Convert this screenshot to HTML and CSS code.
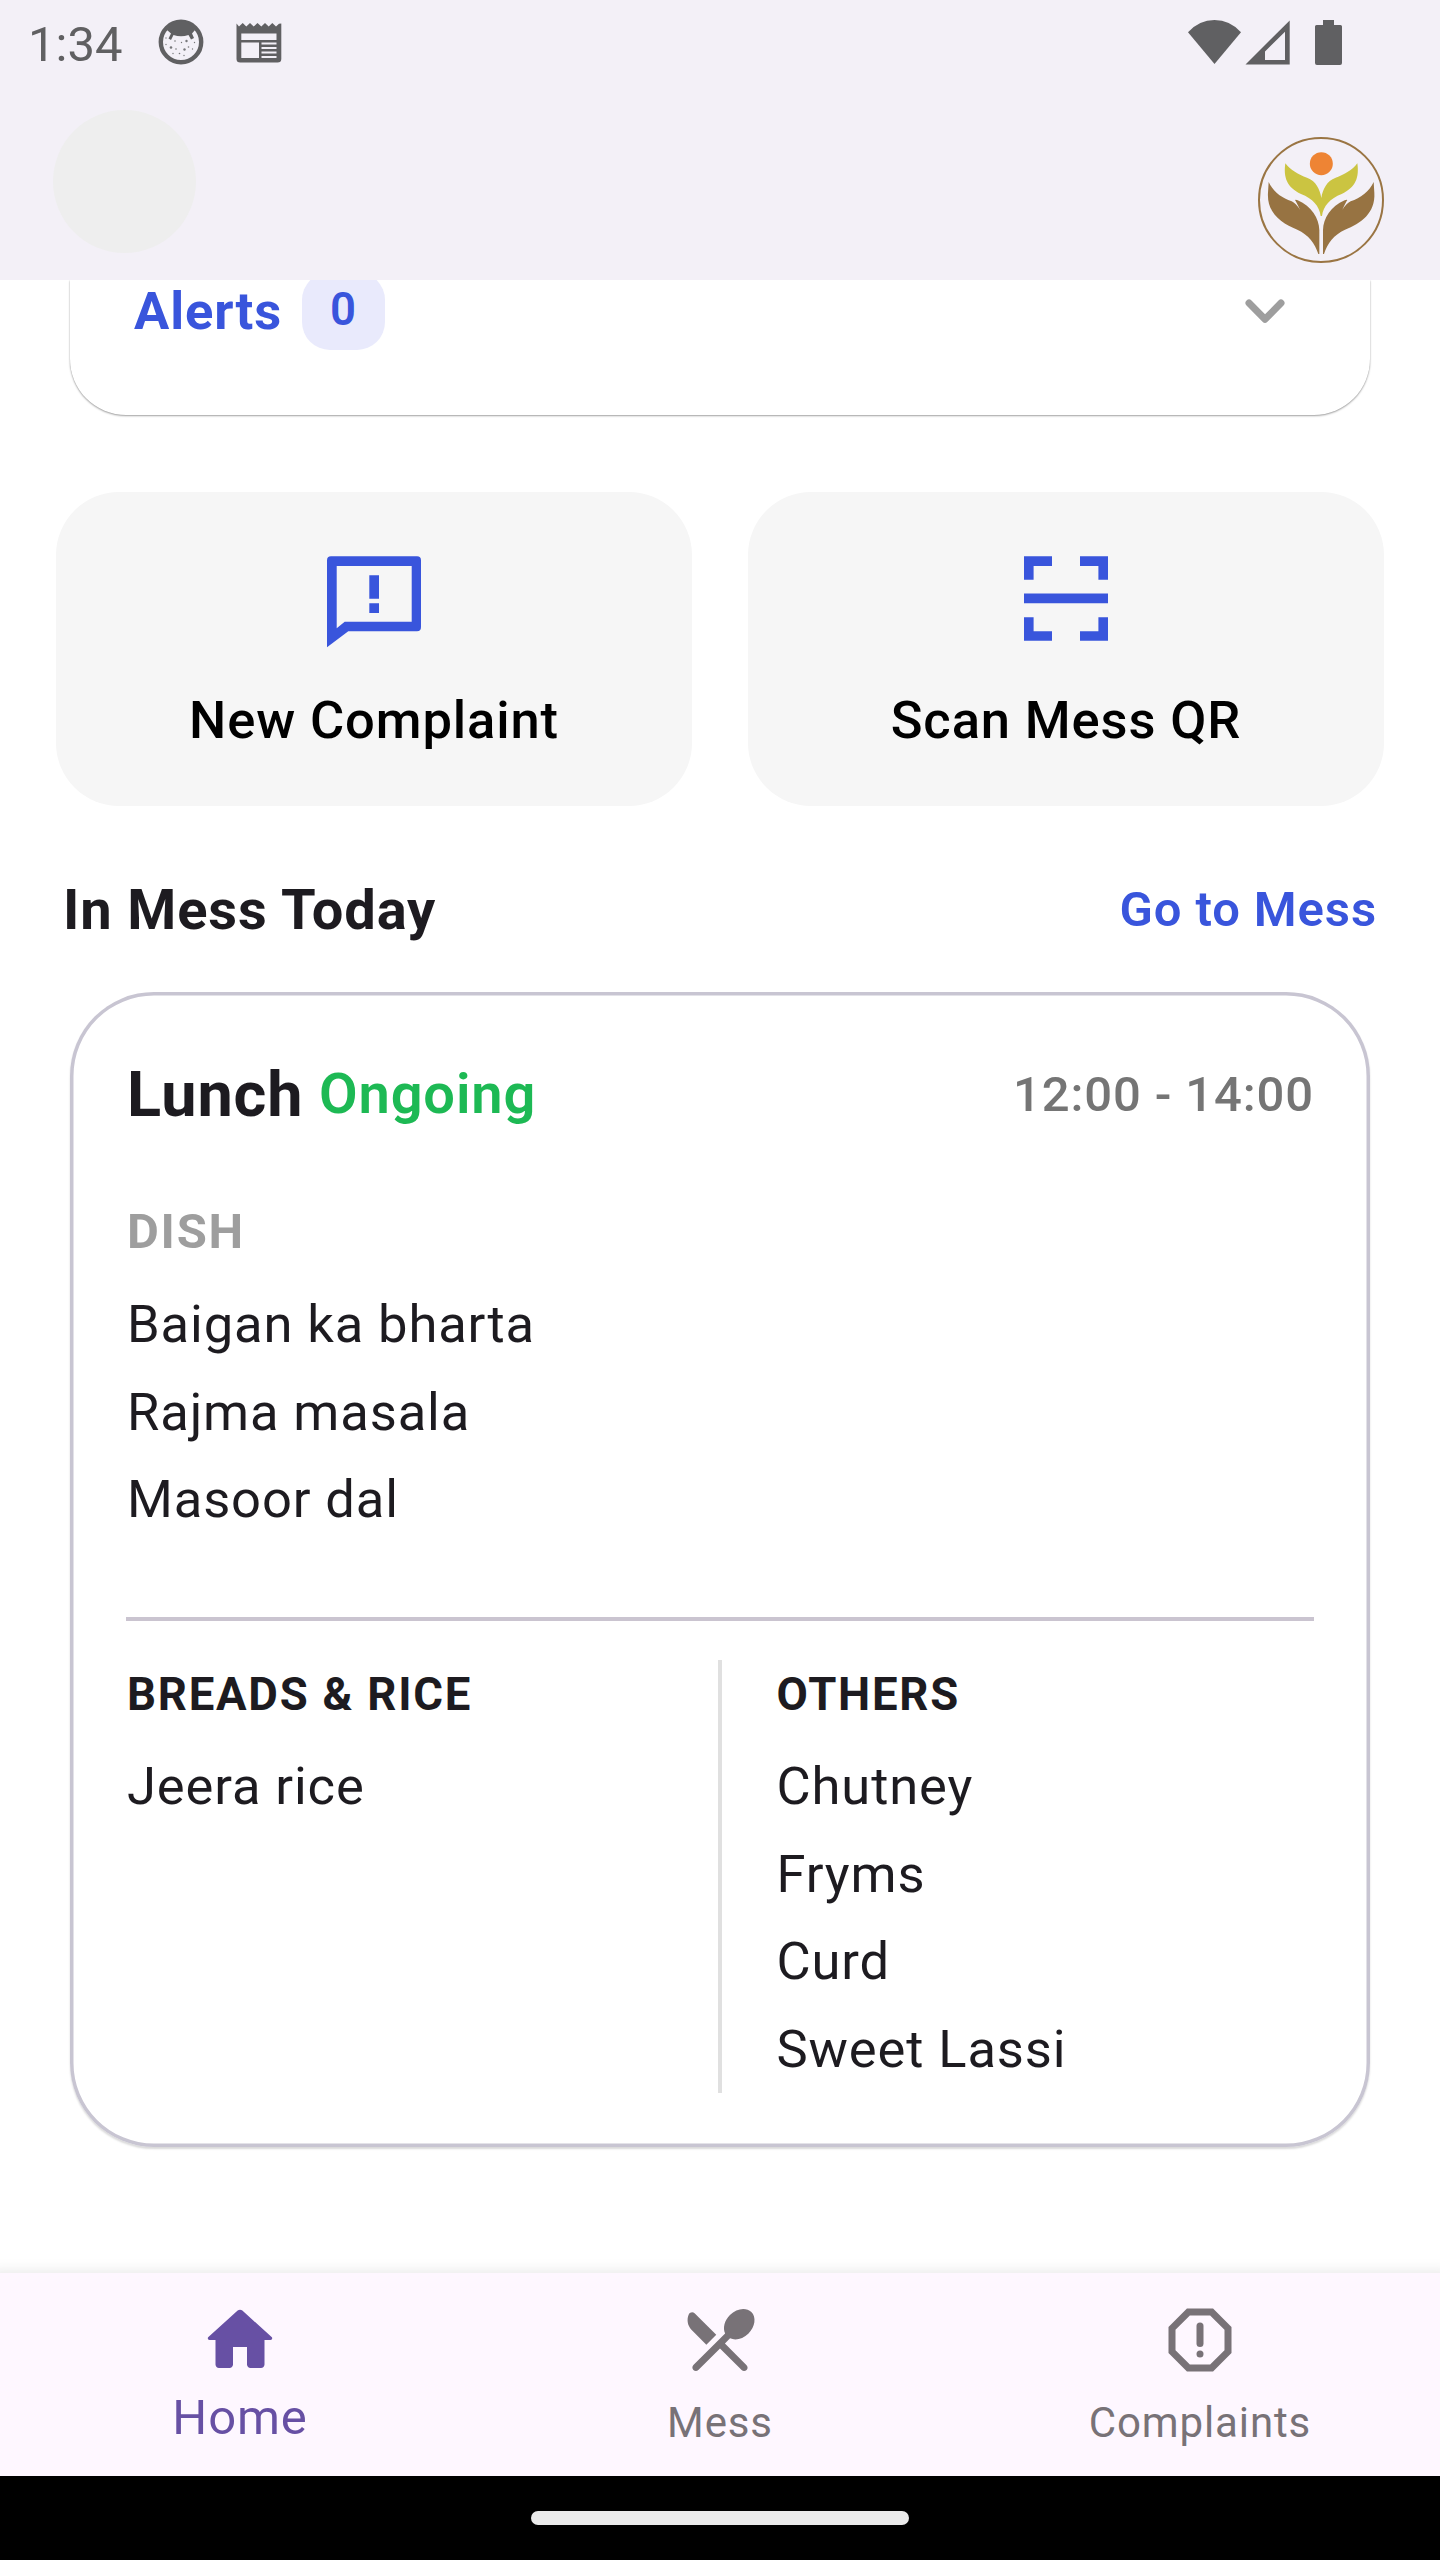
FILE: index.html
```html
<!DOCTYPE html>
<html lang="en">
<head>
<meta charset="utf-8">
<title>Home</title>
<link rel="stylesheet" href="styles.css">
</head>
<body>
<header class="top">
  <div class="status">
    <span class="clock">1:34</span>
    <svg class="face" width="46" height="46" viewBox="0 0 46 46">
      <circle cx="23" cy="23" r="20.2" fill="none" stroke="#606062" stroke-width="4.4"/>
      <path d="M9 11Q14 2 23 2T37 11L34 14.500 36 19 33 20.500 30.500 16Q23 18.500 15.500 16L13 21 10.500 19.500 13 14.500Z" fill="#606062"/>
      <g fill="#77777a"><circle cx="13" cy="28.500" r="1.300"/><circle cx="28.500" cy="22" r="1.200"/><circle cx="26.500" cy="30.500" r="1.200"/><circle cx="17" cy="22" r=".8"/><circle cx="23.500" cy="23.500" r=".7"/><circle cx="8" cy="19" r=".7"/><circle cx="8" cy="25.500" r=".7"/><circle cx="18" cy="30" r=".8"/><circle cx="15" cy="34.500" r=".7"/><circle cx="21.500" cy="34.500" r=".8"/><circle cx="26" cy="36.500" r=".7"/><circle cx="30.500" cy="28" r=".8"/><circle cx="34.500" cy="30" r=".7"/><circle cx="36.500" cy="23.500" r=".7"/></g>
    </svg>
    <svg class="news" width="46" height="40" viewBox="0 0 46 40">
      <path d="M.5.500 3 3.500 6.700 0 10.300 3.500 14 0 17.700 3.500 21.500 0 25.300 3.500 29 0 32.700 3.500 36.300 0 40 3.500 43 .8 45.300.500V36Q45.300 39.500 41.500 39.500H4.300Q.5 39.500.5 36Z" fill="#606062"/>
      <path d="M5.300 10.500H40.500V17H5.300ZM5.300 19.500H23V35H5.300ZM25.500 19.500H40.500V21.500H25.500ZM25.500 24H40.500V26H25.500ZM25.500 28.500H40.500V30.500H25.500ZM25.500 33H40.500V35H25.500Z" fill="#f3f0f7"/>
    </svg>
    <svg class="signals" width="154" height="46" viewBox="0 0 154 46" fill="#606062">
      <path d="M0 13.300Q11 1 26.500 1T53 13.300L26.500 45Z"/>
      <path fill-rule="evenodd" d="M57.500 45.500 101.700 1.500V45.500ZM77 32.500V41H97V12.700Z"/>
      <path d="M135 1H146V6H152.500Q154 6 154 7.500V44Q154 46 152 46H129Q127 46 127 44V7.500Q127 6 128.500 6H135Z"/>
    </svg>
  </div>
  <div class="bar">
    <div class="avatar"></div>
    <svg class="logo" width="126" height="126" viewBox="294 411 378 378">
      <circle cx="483" cy="600" r="186" fill="none" stroke="#9a7543" stroke-width="6"/>
      <circle cx="484" cy="491" r="34.500" fill="#ee8434"/>
      <path fill="#cbc441" d="M376 490C392 510 415 524 441 533C468 543 480 568 484 594C488 568 500 543 527 533C553 524 577 510 592 490C598 532 588 562 545 582C510 596 490 618 486 648H482C478 618 458 596 423 582C380 562 370 532 376 490Z"/>
      <g fill="#977342">
        <path d="M326 546C340 575 365 594 395 604Q407 610 420 629Q410 608 405 600Q408 598 413 601C455 619 477 655 478 690V762H475C465 730 445 704 412 689C365 670 320 640 324 578Z"/>
        <path transform="translate(967 0) scale(-1 1)" d="M326 546C340 575 365 594 395 604Q407 610 420 629Q410 608 405 600Q408 598 413 601C455 619 477 655 478 690V762H475C465 730 445 704 412 689C365 670 320 640 324 578Z"/>
      </g>
    </svg>
  </div>
</header>

<main class="content">
  <section class="alerts">
    <div class="alerts-row">
      <span class="alerts-title">Alerts</span>
      <span class="badge">0</span>
      <svg class="chevron" width="40" height="25" viewBox="0 0 40 25"><path d="M4 4 20 20.300 36 4" fill="none" stroke="#9e9e9e" stroke-width="7" stroke-linecap="round" stroke-linejoin="round"/></svg>
    </div>
  </section>

  <section class="tiles">
    <div class="tile">
      <svg width="112" height="112" viewBox="0 0 112 112" fill="#3955dc">
        <path fill-rule="evenodd" d="M9 100.300V13.500Q9 9.300 13 9.300H99Q103 9.300 103 13.500V80Q103 84.300 99 84.300H30.300ZM18.700 81.300 26.700 74.700H93.700V19H18.700Z"/>
        <path d="M51.300 28.300H61V51.700H51.300ZM51.300 56.300H61V66H51.300Z"/>
      </svg>
      <span>New Complaint</span>
    </div>
    <div class="tile">
      <svg width="112" height="112" viewBox="0 0 112 112" fill="#3955dc">
        <path d="M14 9.300H42V19H23.600V32.700H14ZM70 9.300H98V32.700H88.400V19H70ZM14 46.500H98V56.300H14ZM14 70.300H23.600V84.300H42V93.800H14ZM88.400 70.300H98V93.800H70V84.300H88.400Z"/>
      </svg>
      <span>Scan Mess QR</span>
    </div>
  </section>

  <div class="heading">
    <h2>In Mess Today</h2>
    <a class="link">Go to Mess</a>
  </div>

  <section class="meal">
    <div class="meal-head">
      <span class="meal-name">Lunch</span>
      <span class="meal-state">Ongoing</span>
      <span class="meal-time">12:00 - 14:00</span>
    </div>
    <h3 class="dish">DISH</h3>
    <ul class="items">
      <li>Baigan ka bharta</li>
      <li>Rajma masala</li>
      <li>Masoor dal</li>
    </ul>
    <div class="rule"></div>
    <div class="columns">
      <div class="col">
        <h3>BREADS &amp; RICE</h3>
        <ul class="items"><li>Jeera rice</li></ul>
      </div>
      <div class="divider"></div>
      <div class="col col-right">
        <h3>OTHERS</h3>
        <ul class="items">
          <li>Chutney</li>
          <li>Fryms</li>
          <li>Curd</li>
          <li>Sweet Lassi</li>
        </ul>
      </div>
    </div>
  </section>
</main>

<nav class="nav">
  <a class="tab tab-active">
    <svg width="84" height="84" viewBox="0 0 24 24" fill="currentColor"><path d="M10 19v-5h4v5c0 .55.45 1 1 1h3c.55 0 1-.45 1-1v-7h1.700c.46 0 .68-.57.33-.87L12.670 3.600c-.38-.34-.96-.34-1.340 0l-8.360 7.530c-.34.3-.13.87.33.87H5v7c0 .55.45 1 1 1h3c.55 0 1-.45 1-1z"/></svg>
    <span>Home</span>
  </a>
  <a class="tab">
    <svg width="84" height="84" viewBox="0 0 24 24" fill="currentColor"><path d="M8.100 13.340l2.830-2.830-6.190-6.180c-.48-.48-1.310-.35-1.610.27-.71 1.490-.45 3.320.78 4.560l4.190 4.180zm6.780-1.810c1.530.71 3.680.21 5.270-1.380 1.910-1.910 2.280-4.650.81-6.120-1.460-1.460-4.200-1.100-6.120.81-1.590 1.590-2.090 3.740-1.380 5.270L4.400 19.170c-.39.39-.39 1.020 0 1.410.39.39 1.020.39 1.410 0L12 14.410l6.180 6.180c.39.39 1.020.39 1.410 0 .39-.39.39-1.020 0-1.410L13.410 13l1.470-1.470z"/></svg>
    <span>Mess</span>
  </a>
  <a class="tab">
    <svg width="84" height="84" viewBox="0 0 24 24" fill="currentColor"><path fill-rule="evenodd" d="M15.730 3H8.270L3 8.270v7.460L8.270 21h7.460L21 15.730V8.270zM19 14.900 14.900 19H9.100L5 14.900V9.100L9.100 5h5.800L19 9.100z"/><path d="M12 8v5" stroke="currentColor" stroke-width="2" stroke-linecap="round"/><circle cx="12" cy="16" r="1"/></svg>
    <span>Complaints</span>
  </a>
</nav>
<footer class="gesture"><div class="pill"></div></footer>
</body>
</html>
```
FILE: styles.css
```css
* { box-sizing: border-box; }

body {
  margin: 0;
  width: 1440px;
  height: 2560px;
  display: flex;
  flex-direction: column;
  overflow: hidden;
  background: #fff;
  color: #1d1b20;
  font-family: Roboto, "Liberation Sans", sans-serif;
  font-size: 52.5px;
  letter-spacing: .875px;
  white-space: nowrap;
}

h2, h3, ul { margin: 0; padding: 0; list-style: none; }
svg { display: block; flex: none; }

/* Status bar and app bar */
.top { flex: none; height: 280px; background: #f3f0f7; }
.status {
  display: flex;
  align-items: center;
  height: 89px;
  padding: 0 97px 0 28px;
  color: #606062;
}
.clock { width: 130px; font-size: 49px; letter-spacing: 0; }
.face { margin-top: -5px; }
.news { margin: -4px 0 0 32px; }
.signals { margin: -6px 1px 0 auto; }
.bar {
  display: flex;
  justify-content: space-between;
  align-items: flex-start;
  padding: 21px 56px 0 53px;
}
.avatar { width: 143px; height: 143px; border-radius: 50%; background: #eee; }
.logo { margin-top: 27px; }

/* Scrolled content */
.content { flex: 1; min-height: 0; overflow: hidden; }
.alerts {
  height: 135px;
  margin: 0 70px;
  border-radius: 0 0 56px 56px;
  background: #fff;
  box-shadow: 0 0 1px rgba(0, 0, 0, .2), 0 1px 2px rgba(0, 0, 0, .36);
}
.alerts-row {
  display: flex;
  align-items: center;
  height: 62px;
  padding: 0 85px 0 64px;
  color: #3955dc;
}
.alerts-title { width: 168px; font-weight: 700; }
.badge {
  width: 83px;
  height: 78px;
  border-radius: 28px;
  background: #e9eafc;
  font-size: 45.5px;
  font-weight: 600;
  line-height: 75px;
  text-align: center;
}
.chevron { margin-left: auto; }

.tiles {
  display: flex;
  gap: 56px;
  margin: 77px 56px 0;
}
.tile {
  flex: 1;
  display: flex;
  flex-direction: column;
  align-items: center;
  gap: 26px;
  height: 314px;
  padding-top: 55px;
  border-radius: 63px;
  background: #f6f6f6;
  color: #000;
  font-weight: 500;
  line-height: 70px;
}

.heading {
  display: flex;
  justify-content: space-between;
  margin-top: 69px;
  padding: 0 63px;
  line-height: 70px;
}
.heading h2 { font-size: 56px; font-weight: 700; }
.link { color: #3955dc; font-size: 49px; font-weight: 600; }

/* Meal card */
.meal {
  height: 1155px;
  margin: 47px 70px 0;
  padding: 65px 56px 0;
  border-radius: 84px;
  box-shadow: inset 0 0 0 3.5px #c8c5d2, 0 2px 2px rgba(0, 0, 0, .15);
}
.meal-head {
  display: flex;
  align-items: center;
  height: 74px;
}
.meal-name { width: 193px; font-size: 63px; font-weight: 700; }
.meal-state { color: #1db954; font-size: 56px; font-weight: 600; }
.meal-time { margin-left: auto; color: #757575; font-size: 49px; font-weight: 500; }
.meal-name, .dish, .col h3, .items { padding-left: 1px; }
.dish {
  margin: 66px 0 14px;
  color: #9e9e9e;
  font-size: 49px;
  font-weight: 700;
  letter-spacing: 1.75px;
  line-height: 70px;
}
.items li { height: 87.5px; line-height: 87.5px; }
.rule { height: 4px; margin-top: 73px; background: #cac4d0; }
.columns {
  display: grid;
  grid-template-columns: 592px 3.5px 1fr;
  height: 431px;
  margin-top: 39.5px;
}
.col h3 {
  margin-bottom: 13px;
  font-size: 45.5px;
  font-weight: 700;
  letter-spacing: 1.75px;
  line-height: 70px;
}
.divider { background: #e0e0e0; }
.col-right { padding-left: 54px; }

/* Bottom navigation */
.nav {
  position: relative;
  flex: none;
  display: grid;
  grid-template-columns: repeat(3, 1fr);
  height: 203px;
  background: #fef7ff;
  box-shadow: 0 11px 14px 12px rgba(0, 0, 0, .1);
}
.tab {
  display: flex;
  flex-direction: column;
  align-items: center;
  gap: 11px;
  padding-top: 25px;
  color: #787277;
  font-size: 42px;
  line-height: 60px;
}
.tab-active { gap: 6px; color: #6750a4; font-size: 49px; }
.gesture {
  position: relative;
  flex: none;
  display: flex;
  justify-content: center;
  height: 84px;
  padding-top: 35px;
  background: #000;
}
.pill { width: 378px; height: 14px; border-radius: 7px; background: #ebebeb; }
```
